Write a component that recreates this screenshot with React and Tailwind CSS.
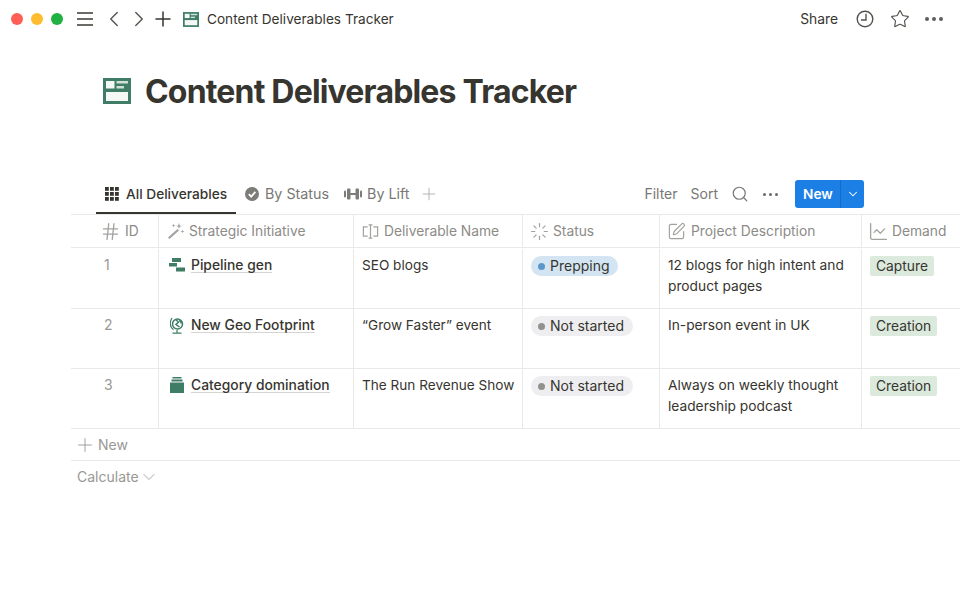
import { ChevronLeft, ChevronRight, ChevronDown, Plus, Search, Star, Hash, Loader, SquarePen, ChartLine } from "lucide-react";

const DocIcon = ({ className }) => (
  <svg viewBox="0 0 28 26" className={className}>
    <rect width="28" height="26" fill="#3f7d66" />
    <rect x="3" y="3" width="8.500" height="7.500" fill="#f4f8f6" />
    <rect x="13.500" y="3" width="11.500" height="2.500" fill="#cfe0d9" />
    <rect x="13.500" y="8" width="7.500" height="2.500" fill="#cfe0d9" />
    <rect x="3" y="14" width="22" height="9" fill="#f4f8f6" />
  </svg>
);

const PipelineIcon = () => (
  <svg viewBox="0 0 16 14" className="w-4 h-3.5 shrink-0">
    <rect x="3" y="0" width="9" height="4" fill="#3f7d66" />
    <rect x="0" y="5" width="8" height="3.500" fill="#3f7d66" />
    <rect x="7" y="9.500" width="9" height="4" fill="#3f7d66" />
  </svg>
);

const GlobeIcon = () => (
  <svg viewBox="0 0 14 17" className="w-3.5 h-[17px] shrink-0" fill="none" stroke="#3f7d66">
    <circle cx="7.500" cy="7" r="5" strokeWidth="1.500" />
    <path d="M5.500 2.500 8.500 5 6 7.500l3.500 2.500M9.500 3 11.500 6.500" strokeWidth="1.500" />
    <path d="M2 1C-.5 5-.5 10 3.500 12.800M7 13v2.500M2.500 16.200h9" strokeWidth="1.200" />
  </svg>
);

const StackIcon = () => (
  <svg viewBox="0 0 14 16" className="w-3.5 h-4 shrink-0">
    <rect x="2.500" y="0" width="9" height="1.500" fill="#3f7d66" />
    <rect x="1.500" y="2.500" width="11" height="2" fill="#3f7d66" />
    <rect x="0" y="5.500" width="14" height="10.500" fill="#3f7d66" />
  </svg>
);

const Dots = ({ className = "" }) => (
  <div className={`flex gap-[3px] ${className}`}>
    <span className="w-[4px] h-[4px] rounded-full bg-[#5f5e5b]" />
    <span className="w-[4px] h-[4px] rounded-full bg-[#5f5e5b]" />
    <span className="w-[4px] h-[4px] rounded-full bg-[#5f5e5b]" />
  </div>
);

const ClockIcon = () => (
  <svg viewBox="0 0 18 18" className="w-[18px] h-[18px] ml-[18px]" fill="none" stroke="#55534e" strokeWidth="1.400">
    <circle cx="9" cy="9" r="7.800" />
    <path d="M10 3.800V10H5" />
  </svg>
);

const GridIcon = () => (
  <svg viewBox="0 0 14 14" className="w-3.5 h-3.5" fill="#37352f">
    {[0, 5, 10].map((y) =>
      [0, 5, 10].map((x) => <rect key={`${x}-${y}`} x={x} y={y} width="3.800" height="3.800" />)
    )}
  </svg>
);

const CheckCircle = () => (
  <svg viewBox="0 0 14 14" className="w-3.5 h-3.5">
    <circle cx="7" cy="7" r="7" fill="#7d7c78" />
    <path d="M3.800 7.200 6.200 9.600 10.400 4.800" fill="none" stroke="#fff" strokeWidth="1.800" />
  </svg>
);

const DumbbellIcon = () => (
  <svg viewBox="0 0 18 12" className="w-[18px] h-3" fill="#7d7c78">
    <rect x="0" y="2.500" width="2" height="7" rx="1" />
    <rect x="3" y="0.500" width="3.500" height="11" rx="1" />
    <rect x="6" y="5" width="6" height="2" />
    <rect x="11.500" y="0.500" width="3.500" height="11" rx="1" />
    <rect x="16" y="2.500" width="2" height="7" rx="1" />
  </svg>
);

const WandIcon = ({ size, className }) => (
  <svg viewBox="0 0 18 17" width={size} height={size} className={className} fill="#a3a29e">
    <path d="M1 15 10.500 6.500 12 8 2.500 16.500Z" />
    <path d="M12 0.500 12.800 3 15 3.500 12.800 4.200 12 6.500 11.200 4.200 9 3.500 11.200 3Z" />
    <path d="M15.500 7 16 8.500 17.500 9 16 9.500 15.500 11 15 9.500 13.500 9 15 8.500Z" />
    <path d="M6.500 1 7 2.500 8.500 3 7 3.500 6.500 5 6 3.500 4.500 3 6 2.500Z" />
  </svg>
);

const RenameIcon = ({ size, className }) => (
  <svg viewBox="0 0 18 16" width={size} height={size} className={className} fill="none" stroke="#a3a29e" strokeWidth="1.300">
    <path d="M6 3H1.500v10H6M12 3h4.500v10H12" />
    <path d="M7 1h4M7 15h4M9 1v14" />
  </svg>
);

const columns = [
  { label: "ID", Icon: Hash, w: "w-[88px]", pl: "pl-[29px]", gap: "gap-[4px]", size: 21 },
  { label: "Strategic Initiative", Icon: WandIcon, w: "w-[195px]", pl: "pl-[8px]", gap: "gap-[4px]", size: 18 },
  { label: "Deliverable Name", Icon: RenameIcon, w: "w-[169px]", pl: "pl-[8px]", gap: "gap-[5px]", size: 17 },
  { label: "Status", Icon: Loader, w: "w-[137px]", pl: "pl-[7px]", gap: "gap-[4px]", size: 19 },
  { label: "Project Description", Icon: SquarePen, w: "w-[202px]", pl: "pl-[7px]", gap: "gap-[5px]", size: 19 },
  { label: "Demand", Icon: ChartLine, w: "flex-1", pl: "pl-[6px]", gap: "gap-[3px]", size: 21 },
];

const rows = [
  { id: 1, Icon: PipelineIcon, name: "Pipeline gen", deliverable: "SEO blogs", status: "Prepping", desc: "12 blogs for high intent and product pages", demand: "Capture", row: "h-[61px] pt-px" },
  { id: 2, Icon: GlobeIcon, name: "New Geo Footprint", deliverable: "“Grow Faster” event", status: "Not started", desc: "In-person event in UK", demand: "Creation", row: "h-[60px]" },
  { id: 3, Icon: StackIcon, name: "Category domination", deliverable: "The Run Revenue Show", status: "Not started", desc: "Always on weekly thought leadership podcast", demand: "Creation", row: "h-[60px]" },
];

const StatusPill = ({ status }) => {
  const prepping = status === "Prepping";
  return (
    <span className={`flex items-center h-5 pl-[7px] pr-[8.500px] gap-[5px] rounded-full ${prepping ? "bg-[#d3e5f3]" : "bg-[#eeedef]"}`}>
      <span className={`w-[7px] h-[7px] rounded-full ${prepping ? "bg-[#5b97c9]" : "bg-[#91918e]"}`} />
      {status}
    </span>
  );
};

export default function App() {
  return (
    <div className="w-[960px] h-[600px] bg-white overflow-hidden text-[14px] leading-5 text-[#37352f] font-['Inter',sans-serif]">
      {/* title bar */}
      <div className="h-[38px] flex items-center">
        <div className="flex gap-2 pl-[11px]">
          <span className="w-3 h-3 rounded-full bg-[#ff5f57]" />
          <span className="w-3 h-3 rounded-full bg-[#febc2e]" />
          <span className="w-3 h-3 rounded-full bg-[#1fb141]" />
        </div>
        <div className="ml-[14px] w-4 flex flex-col gap-1">
          <span className="h-[2px] bg-[#6b6a67]" />
          <span className="h-[2px] bg-[#6b6a67]" />
          <span className="h-[2px] bg-[#6b6a67]" />
        </div>
        <ChevronLeft className="ml-[8px] text-[#55534e]" size={26} strokeWidth={1.300} />
        <ChevronRight className="ml-[-1px] text-[#55534e]" size={26} strokeWidth={1.300} />
        <Plus className="ml-[-1px] text-[#37352f]" size={24} strokeWidth={1.500} />
        <DocIcon className="ml-[8px] w-4 h-[15px]" />
        <span className="ml-[8px] text-[13.640px]">Content Deliverables Tracker</span>
        <span className="ml-auto text-[13.800px]">Share</span>
        <ClockIcon />
        <Star className="ml-[16px] text-[#55534e]" size={20} strokeWidth={1.400} />
        <Dots className="ml-[15px] mr-[17px]" />
      </div>

      {/* page title */}
      <div className="h-[138px] pt-[34px] pl-[103px] flex items-start gap-[14px]">
        <DocIcon className="w-7 h-[26px] mt-[6px]" />
        <h1 className="text-[32px] leading-[40px] font-bold tracking-[-0.820px]">Content Deliverables Tracker</h1>
      </div>

      {/* tabs */}
      <div className="ml-[71px] h-[39px] border-b border-[#e9e9e7] flex items-start">
        <div className="ml-[25px] h-[38px] w-[140px] border-b-2 border-[#37352f] flex items-center pl-[9px] gap-[7px] font-medium">
          <GridIcon />
          <span className="text-[13.700px]">All Deliverables</span>
        </div>
        <div className="h-[36px] flex items-center ml-[9px] gap-[6px] text-[#787774]">
          <CheckCircle />
          <span className="text-[14.300px]">By Status</span>
        </div>
        <div className="h-[36px] flex items-center ml-[15px] gap-[5px] text-[#787774]">
          <DumbbellIcon />
          <span className="text-[14.300px]">By Lift</span>
        </div>
        <div className="h-[36px] flex items-center ml-[10px]">
          <Plus size={20} strokeWidth={1.100} className="text-[#b0afab]" />
        </div>
        <div className="ml-auto h-[36px] flex items-center text-[#787774]">
          <span>Filter</span>
          <span className="ml-[13px]">Sort</span>
          <Search className="ml-[13px]" size={18} strokeWidth={1.600} />
          <Dots className="ml-[14px] [&>span]:w-[3px] [&>span]:h-[3px] [&>span]:bg-[#6b6a67]" />
          <div className="ml-[17px] mr-[96px] w-[69px] h-7 bg-[#1c7fe6] rounded-[3px] flex items-center text-white font-semibold text-[13.700px]">
            <span className="w-[45px] pl-[8px]">New</span>
            <span className="flex-1 h-full flex items-center justify-center border-l border-[#176bc4]">
              <ChevronDown size={14} strokeWidth={1.800} />
            </span>
          </div>
        </div>
      </div>

      {/* table */}
      <div className="ml-[71px]">
        <div className="flex h-[33px] border-b border-[#e9e9e7] text-[#8c8b87] text-[13.800px]">
          {columns.map(({ label, Icon, w, pl, gap, size }) => (
            <div key={label} className={`${w} ${pl} ${gap} flex items-center border-r border-[#e9e9e7] last:border-r-0`}>
              <Icon size={size} strokeWidth={1.500} className="text-[#a3a29e] shrink-0" />
              <span>{label}</span>
            </div>
          ))}
        </div>
        {rows.map((r) => (
          <div key={r.id} className={`flex ${r.row} border-b border-[#e9e9e7]`}>
            <div className="w-[88px] border-r border-[#e9e9e7] pl-[33px] pt-[6px] text-[#999894]">{r.id}</div>
            <div className="w-[195px] border-r border-[#e9e9e7] pl-[10px] pt-[6px] flex items-start gap-[7px]">
              <span className="w-[15px] h-5 flex items-center justify-center shrink-0"><r.Icon /></span>
              <span className="font-medium text-[13.850px] border-b border-[#d5d4d1] leading-[20px] h-[18px]">{r.name}</span>
            </div>
            <div className="w-[169px] border-r border-[#e9e9e7] pl-[8px] pt-[6px] text-[13.600px]">{r.deliverable}</div>
            <div className="w-[137px] border-r border-[#e9e9e7] pl-[8px] pt-[7px] flex items-start"><StatusPill status={r.status} /></div>
            <div className="w-[202px] border-r border-[#e9e9e7] pl-[8px] pr-2 pt-[6px] leading-[21px] text-[13.750px]">{r.desc}</div>
            <div className="flex-1 pl-[8px] pt-[7px] flex items-start">
              <span className="flex h-5 items-center px-[6px] rounded-[2px] bg-[#dbeadd] text-[13.800px]">{r.demand}</span>
            </div>
          </div>
        ))}
        <div className="h-[32px] border-b border-[#e9e9e7] flex items-center pl-[3px] gap-[2px] text-[#999894]">
          <Plus size={22} strokeWidth={1} />
          <span>New</span>
        </div>
        <div className="h-[32px] flex items-center pl-[6px] text-[#999894]">
          <span>Calculate</span>
          <ChevronDown size={20} strokeWidth={1} />
        </div>
      </div>
    </div>
  );
}
